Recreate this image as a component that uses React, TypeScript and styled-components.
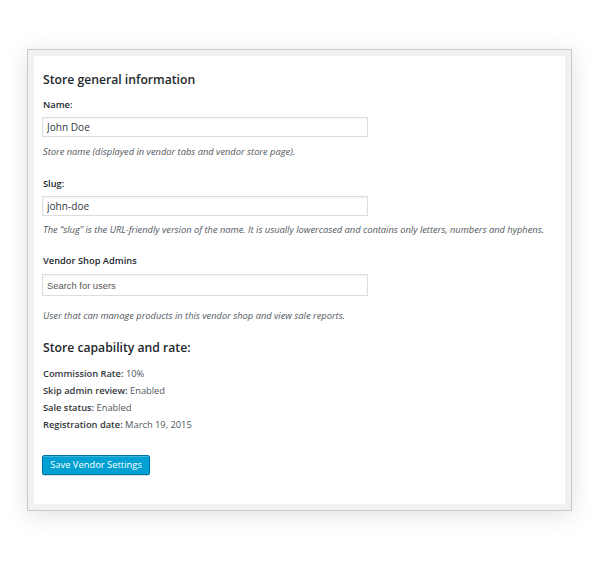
import React, { FC } from "react";
import styled, { createGlobalStyle } from "styled-components";

const GlobalStyle = createGlobalStyle`
    html, body {
        margin: 0;
        padding: 0;
        background: #ffffff;
    }
    body {
        font-family: "Open Sans", "Liberation Sans", sans-serif;
        color: #23282d;
    }
`;

const Page = styled.div`
    padding: 49px 0 52px 27px;
`;

const Frame = styled.div`
    width: 545px;
    box-sizing: border-box;
    border: 1px solid #c9c9c9;
    background: #f1f1f1;
    padding: 6px;
    box-shadow: 0 4px 22px rgba(0, 0, 0, 0.12);
`;

const Panel = styled.div`
    background: #ffffff;
    padding: 15px 9px 29px 9px;
`;

const Heading = styled.h2<{ $top?: number }>`
    margin: ${(p) => p.$top ?? 0}px 0 0 0;
    font-size: 12.2px;
    line-height: 18px;
    font-weight: 600;
    color: #23282d;
`;

const Label = styled.div<{ $top: number }>`
    margin-top: ${(p) => p.$top}px;
    font-size: 9.3px;
    line-height: 15px;
    font-weight: 600;
    color: #23282d;
`;

const TextInput = styled.input<{ $height?: number; $top?: number; $sans?: boolean }>`
    display: block;
    box-sizing: border-box;
    margin: ${(p) => p.$top ?? 5}px 0 0 -1px;
    width: 326px;
    height: ${(p) => p.$height ?? 20}px;
    padding: 0 4px;
    border: 1px solid #dddddd;
    box-shadow: inset 0 1px 2px rgba(0, 0, 0, 0.05);
    background: #ffffff;
    font-family: ${(p) => (p.$sans ? `"Liberation Sans", Arial, sans-serif` : `"Open Sans", sans-serif`)};
    font-size: ${(p) => (p.$sans ? 9.4 : 10.1)}px;
    color: #32373c;
    outline: none;

    &::placeholder {
        color: #555555;
        opacity: 1;
    }
`;

const Hint = styled.p<{ $top: number }>`
    margin: ${(p) => p.$top}px 0 0 0;
    font-size: 9.3px;
    line-height: 14px;
    font-style: italic;
    color: #50575e;
`;

const InfoList = styled.div`
    margin-top: 8px;
    display: flex;
    flex-direction: column;
`;

const InfoRow = styled.div`
    font-size: 9.3px;
    line-height: 17px;
    color: #50575e;

    & > b {
        font-weight: 600;
        color: #32373c;
    }
`;

const SaveButton = styled.button`
    margin: 22px 0 0 -1px;
    display: block;
    height: 20px;
    width: 108px;
    padding: 0;
    background: #00a0d2;
    border: 1px solid #0073aa;
    border-radius: 2px;
    box-shadow: inset 0 1px 0 rgba(120, 200, 230, 0.5), 0 1px 0 rgba(0, 0, 0, 0.15);
    color: #ffffff;
    font-family: "Open Sans", sans-serif;
    font-size: 9.4px;
    line-height: 18px;
    cursor: pointer;
`;

const capabilities = [
    { label: "Commission Rate:", value: "10%" },
    { label: "Skip admin review:", value: "Enabled" },
    { label: "Sale status:", value: "Enabled" },
    { label: "Registration date:", value: "March 19, 2015" },
];

const App: FC = () => {
    return (
        <Page>
            <GlobalStyle />
            <Frame>
                <Panel>
                    <Heading>Store general information</Heading>

                    <Label $top={8}>Name:</Label>
                    <TextInput defaultValue="John Doe" />
                    <Hint $top={8}>Store name (displayed in vendor tabs and vendor store page).</Hint>

                    <Label $top={17}>Slug:</Label>
                    <TextInput defaultValue="john-doe" />
                    <Hint $top={7}>
                        The “slug” is the URL-friendly version of the name. It is usually lowercased and contains only
                        letters, numbers and hyphens.
                    </Hint>

                    <Label $top={16}>Vendor Shop Admins</Label>
                    <TextInput $height={22} $top={6} $sans placeholder="Search for users" />
                    <Hint $top={13}>User that can manage products in this vendor shop and view sale reports.</Hint>

                    <Heading $top={16}>Store capability and rate:</Heading>
                    <InfoList>
                        {capabilities.map((c) => (
                            <InfoRow key={c.label}>
                                <b>{c.label}</b> {c.value}
                            </InfoRow>
                        ))}
                    </InfoList>

                    <SaveButton>Save Vendor Settings</SaveButton>
                </Panel>
            </Frame>
        </Page>
    );
};

export default App;
